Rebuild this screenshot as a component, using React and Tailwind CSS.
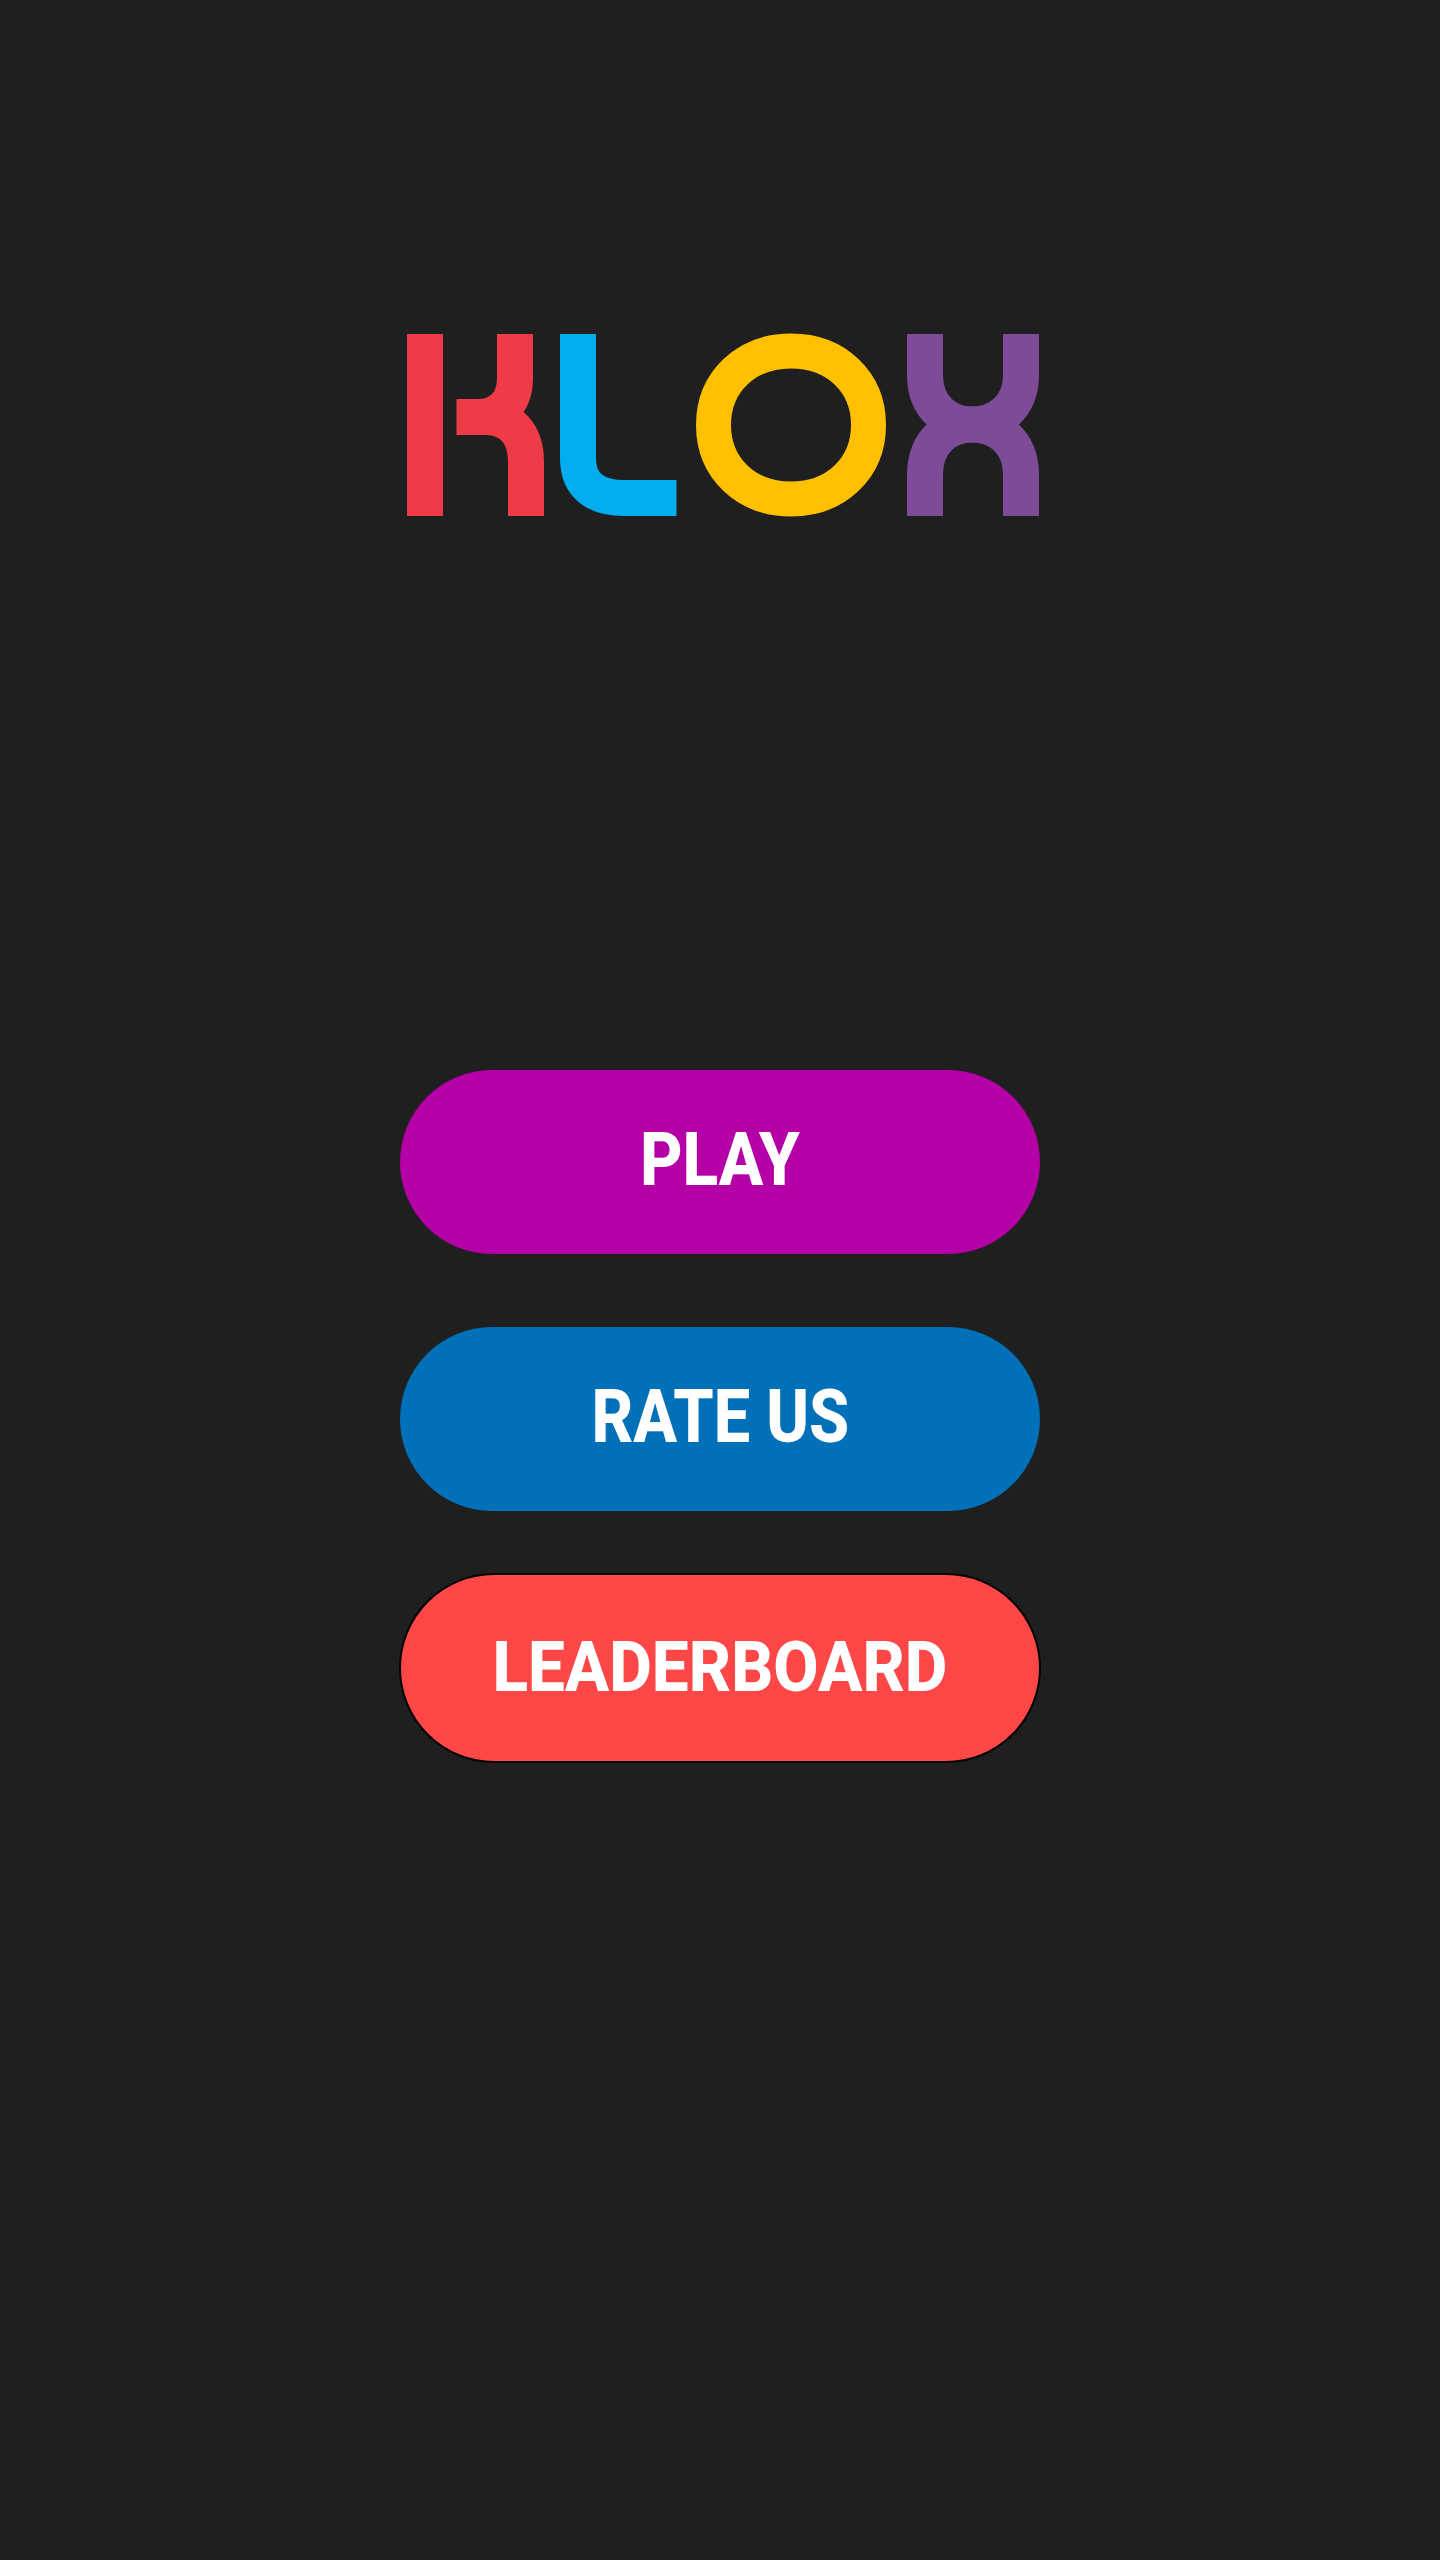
const Logo = () => (
  <svg
    role="img"
    aria-label="KLOX"
    viewBox="400 320 640 210"
    fill="none"
    strokeLinecap="butt"
    strokeWidth="36"
    className="block h-[210px] w-[640px]"
  >
    <g stroke="#ef3b47">
      <path d="M425 334V516" />
      <path d="M515 334V378C515 405 498 417 478 417H456.5" />
      <path d="M470 417H486C510 417 526 433 526 462V516" />
    </g>
    <path d="M578 334V458C578 486 596 498 624 498H676.5" stroke="#00aeef" />
    <path
      d="M713.5 425C713.5 382 746 351 791 351C836 351 868.5 382 868.5 425C868.5 468 836 499 791 499C746 499 713.5 468 713.5 425Z"
      stroke="#ffc000"
      strokeWidth="35"
    />
    <g stroke="#7d4b97">
      <path d="M925 334V375C925 408 948 424.5 972 424.5C997 424.5 1021 408 1021 375V334" />
      <path d="M925 516V475C925 441 948 424.5 972 424.5C997 424.5 1021 441 1021 475V516" />
    </g>
  </svg>
);

const MenuButton = ({ label, className, textClassName }) => (
  <button type="button" className={`flex items-center justify-center rounded-full ${className}`}>
    <span
      className={`block whitespace-nowrap pb-1 font-['Roboto',sans-serif] font-extrabold leading-none text-white ${textClassName}`}
    >
      {label}
    </span>
  </button>
);

export default function App() {
  return (
    <main className="min-h-[2560px] bg-[#1f1f1f] pt-[320px]">
      <div className="mx-auto flex w-[640px] flex-col items-center">
        <Logo />
        <MenuButton
          label="PLAY"
          className="mt-[540px] h-[184px] w-[640px] bg-[#b400a6]"
          textClassName="text-[74px] scale-x-[0.89]"
        />
        <MenuButton
          label="RATE US"
          className="mt-[73px] h-[184px] w-[640px] bg-[#0071b8]"
          textClassName="text-[74px] scale-x-[0.875]"
        />
        <MenuButton
          label="LEADERBOARD"
          className="mt-[62px] h-[190px] w-[642px] border-2 border-black bg-[#ff4747]"
          textClassName="text-[71px] scale-x-[0.925]"
        />
      </div>
    </main>
  );
}
